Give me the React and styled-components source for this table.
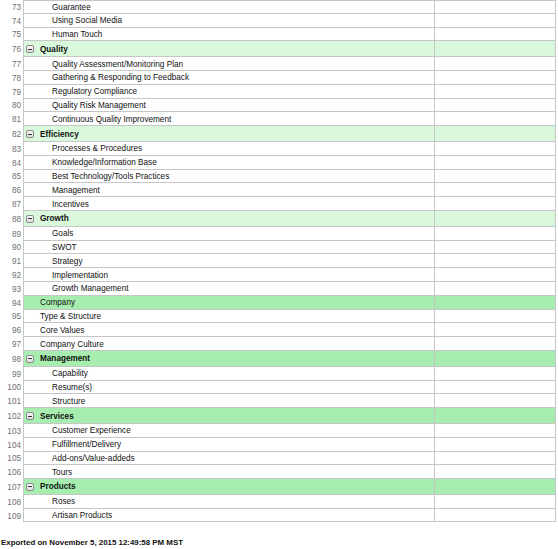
import styled, { createGlobalStyle } from "styled-components";

const GlobalStyle = createGlobalStyle`
  body {
    margin: 0;
    background: #ffffff;
    font-family: "Liberation Sans", Arial, sans-serif;
  }
`;

const grid = "#c6c6c6";
const lightGreen = "#daf8dc";
const darkGreen = "#a8edb0";

const rows = [
  { n: 73, label: "Guarantee", indent: 2 },
  { n: 74, label: "Using Social Media", indent: 2 },
  { n: 75, label: "Human Touch", indent: 2 },
  { n: 76, label: "Quality", group: "light" },
  { n: 77, label: "Quality Assessment/Monitoring Plan", indent: 2 },
  { n: 78, label: "Gathering & Responding to Feedback", indent: 2 },
  { n: 79, label: "Regulatory Compliance", indent: 2 },
  { n: 80, label: "Quality Risk Management", indent: 2 },
  { n: 81, label: "Continuous Quality Improvement", indent: 2 },
  { n: 82, label: "Efficiency", group: "light" },
  { n: 83, label: "Processes & Procedures", indent: 2 },
  { n: 84, label: "Knowledge/Information Base", indent: 2 },
  { n: 85, label: "Best Technology/Tools Practices", indent: 2 },
  { n: 86, label: "Management", indent: 2 },
  { n: 87, label: "Incentives", indent: 2 },
  { n: 88, label: "Growth", group: "light" },
  { n: 89, label: "Goals", indent: 2 },
  { n: 90, label: "SWOT", indent: 2 },
  { n: 91, label: "Strategy", indent: 2 },
  { n: 92, label: "Implementation", indent: 2 },
  { n: 93, label: "Growth Management", indent: 2 },
  { n: 94, label: "Company", section: true },
  { n: 95, label: "Type & Structure", indent: 1 },
  { n: 96, label: "Core Values", indent: 1 },
  { n: 97, label: "Company Culture", indent: 1 },
  { n: 98, label: "Management", group: "dark" },
  { n: 99, label: "Capability", indent: 2 },
  { n: 100, label: "Resume(s)", indent: 2 },
  { n: 101, label: "Structure", indent: 2 },
  { n: 102, label: "Services", group: "dark" },
  { n: 103, label: "Customer Experience", indent: 2 },
  { n: 104, label: "Fulfillment/Delivery", indent: 2 },
  { n: 105, label: "Add-ons/Value-addeds", indent: 2 },
  { n: 106, label: "Tours", indent: 2 },
  { n: 107, label: "Products", group: "dark" },
  { n: 108, label: "Roses", indent: 2 },
  { n: 109, label: "Artisan Products", indent: 2 },
];

const Page = styled.div`
  width: 558px;
  font-size: 8.2px;
  color: #111;
`;

const Table = styled.div`
  display: flex;
  flex-direction: column;
`;

const Row = styled.div`
  display: grid;
  grid-template-columns: 23px 411px 122px;
  height: ${(p) => (p.tall ? "15.8px" : "13.8px")};
`;

const Num = styled.div`
  display: flex;
  align-items: center;
  justify-content: flex-end;
  padding: 1px 2px 0 0;
  color: #707070;
`;

const Cell = styled.div`
  display: flex;
  align-items: center;
  box-sizing: border-box;
  border-left: 1px solid ${grid};
  border-bottom: 1px solid ${grid};
  border-top: ${(p) => (p.first ? `1px solid ${grid}` : "none")};
  border-right: ${(p) => (p.last ? `1px solid ${grid}` : "none")};
  background: ${(p) => p.bg || "#ffffff"};
  padding-left: ${(p) => p.pad || 0}px;
  padding-top: 1px;
  font-weight: ${(p) => (p.bold ? 700 : 400)};
  white-space: nowrap;
`;

const Toggle = styled.span`
  box-sizing: border-box;
  width: 8px;
  height: 8px;
  margin-right: 6px;
  border: 1px solid #8a8a8a;
  border-radius: 2px;
  background: linear-gradient(#fafafa, #dcdcdc);
  display: flex;
  align-items: center;
  justify-content: center;

  &::after {
    content: "";
    width: 4px;
    height: 1px;
    background: #333;
  }
`;

const Footer = styled.div`
  margin-top: 16px;
  padding-left: 1px;
  font-weight: 700;
  font-size: 7.9px;
  color: #111;
`;

const padFor = (r) => {
  if (r.group) return 2;
  if (r.section) return 16;
  return r.indent === 1 ? 16 : 28;
};

const bgFor = (r) => {
  if (r.group === "light") return lightGreen;
  if (r.group === "dark" || r.section) return darkGreen;
  return null;
};

const App = () => (
  <Page>
    <GlobalStyle />
    <Table>
      {rows.map((r, i) => (
        <Row key={r.n} tall={!!r.group}>
          <Num>{r.n}</Num>
          <Cell first={i === 0} bg={bgFor(r)} pad={padFor(r)} bold={!!r.group}>
            {r.group && <Toggle />}
            {r.label}
          </Cell>
          <Cell first={i === 0} last bg={bgFor(r)} />
        </Row>
      ))}
    </Table>
    <Footer>Exported on November 5, 2015 12:49:58 PM MST</Footer>
  </Page>
);

export default App;
